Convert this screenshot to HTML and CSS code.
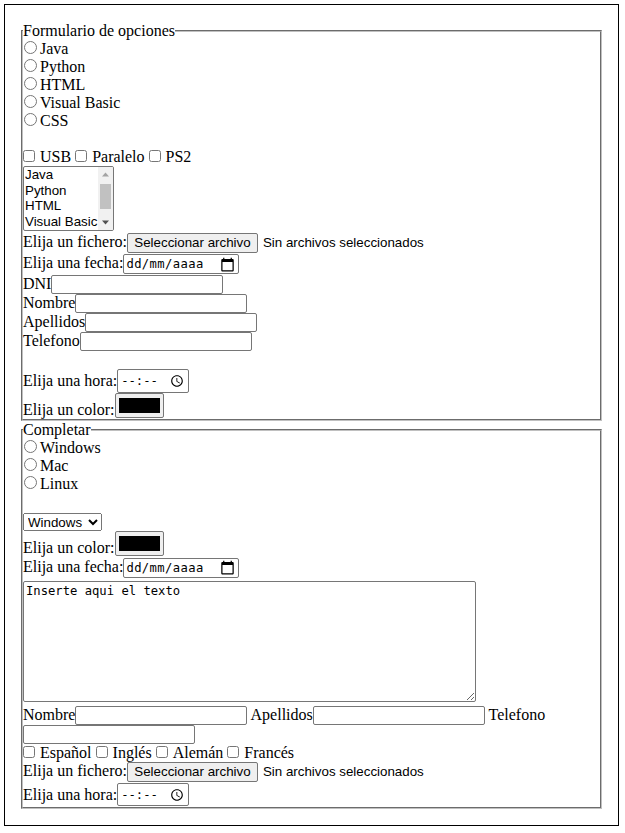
FILE: index.html
```html
<!DOCTYPE html>
<html lang="es">
<head>
<meta charset="utf-8">
<title>Formulario</title>
<link rel="stylesheet" href="styles.css">
</head>
<body>
<div class="page">
  <fieldset class="box">
    <legend class="legend">Formulario de opciones</legend>
    <div class="line"><input type="radio" name="lang" class="radio">Java</div>
    <div class="line"><input type="radio" name="lang" class="radio">Python</div>
    <div class="line"><input type="radio" name="lang" class="radio">HTML</div>
    <div class="line"><input type="radio" name="lang" class="radio">Visual Basic</div>
    <div class="line"><input type="radio" name="lang" class="radio">CSS</div>
    <div class="line"></div>
    <div class="line"><input type="checkbox" class="check">USB <input type="checkbox" class="check">Paralelo <input type="checkbox" class="check">PS2</div>
    <div class="listbox">
      <div class="options">
        <div class="opt">Java</div>
        <div class="opt">Python</div>
        <div class="opt">HTML</div>
        <div class="opt">Visual Basic</div>
      </div>
      <div class="scrollbar">
        <svg class="arrow" width="15" height="15" viewBox="0 0 15 15"><polygon points="4,9.5 11,9.5 7.5,5.5" fill="#a3a3a3"/></svg>
        <div class="track"><div class="thumb"></div></div>
        <svg class="arrow" width="15" height="15" viewBox="0 0 15 15"><polygon points="4,5.5 11,5.5 7.5,9.5" fill="#505050"/></svg>
      </div>
    </div>
    <div class="line h21">Elija un fichero:<span class="filebtn">Seleccionar archivo</span><span class="filetext">Sin archivos seleccionados</span></div>
    <div class="line h21">Elija una fecha:<span class="datebox"><span class="fieldin"><span class="dtext">dd/mm/aaaa</span><svg class="cal" width="15" height="15" viewBox="0 0 24 24"><path d="M20 3h-1V1h-2v2H7V1H5v2H4c-1.1 0-2 .9-2 2v16c0 1.1.9 2 2 2h16c1.1 0 2-.9 2-2V5c0-1.1-.9-2-2-2zm0 18H4V8h16v13z" fill="#000"/></svg></span></span></div>
    <div class="line h19">DNI<input type="text" class="text"></div>
    <div class="line h19">Nombre<input type="text" class="text"></div>
    <div class="line h19">Apellidos<input type="text" class="text"></div>
    <div class="line h19">Telefono<input type="text" class="text"></div>
    <div class="line"></div>
    <div class="line h24">Elija una hora:<span class="timebox"><span class="fieldin"><span class="ttext">--:--</span><svg class="clock" width="14" height="14" viewBox="0 0 24 24"><path d="M11.99 2C6.47 2 2 6.48 2 12s4.47 10 9.99 10C17.52 22 22 17.52 22 12S17.52 2 11.99 2zM12 20c-4.42 0-8-3.58-8-8s3.58-8 8-8 8 3.58 8 8-3.58 8-8 8zm.5-13H11v6l5.25 3.15.75-1.23-4.5-2.67z" fill="#000"/></svg></span></span></div>
    <div class="line h26">Elija un color:<span class="colorbox"><span class="swatch"></span></span></div>
  </fieldset>
  <fieldset class="box">
    <legend class="legend">Completar</legend>
    <div class="line"><input type="radio" name="so" class="radio">Windows</div>
    <div class="line"><input type="radio" name="so" class="radio">Mac</div>
    <div class="line"><input type="radio" name="so" class="radio">Linux</div>
    <div class="line"></div>
    <select class="drop">
      <option>Windows</option>
      <option>Mac</option>
      <option>Linux</option>
    </select>
    <div class="line h27">Elija un color:<span class="colorbox"><span class="swatch"></span></span></div>
    <div class="line h23">Elija una fecha:<span class="datebox"><span class="fieldin"><span class="dtext">dd/mm/aaaa</span><svg class="cal" width="15" height="15" viewBox="0 0 24 24"><path d="M20 3h-1V1h-2v2H7V1H5v2H4c-1.1 0-2 .9-2 2v16c0 1.1.9 2 2 2h16c1.1 0 2-.9 2-2V5c0-1.1-.9-2-2-2zm0 18H4V8h16v13z" fill="#000"/></svg></span></span></div>
    <textarea class="area">Inserte aqui el texto</textarea>
    <div class="line h19">Nombre<input type="text" class="text"> Apellidos<input type="text" class="text"> Telefono</div>
    <div class="line h19"><input type="text" class="text"></div>
    <div class="line h17"><input type="checkbox" class="check">Español <input type="checkbox" class="check">Inglés <input type="checkbox" class="check">Alemán <input type="checkbox" class="check">Francés</div>
    <div class="line h21">Elija un fichero:<span class="filebtn">Seleccionar archivo</span><span class="filetext">Sin archivos seleccionados</span></div>
    <div class="line h24">Elija una hora:<span class="timebox"><span class="fieldin"><span class="ttext">--:--</span><svg class="clock" width="14" height="14" viewBox="0 0 24 24"><path d="M11.99 2C6.47 2 2 6.48 2 12s4.47 10 9.99 10C17.52 22 22 17.52 22 12S17.52 2 11.99 2zM12 20c-4.42 0-8-3.58-8-8s3.58-8 8-8 8 3.58 8 8-3.58 8-8 8zm.5-13H11v6l5.25 3.15.75-1.23-4.5-2.67z" fill="#000"/></svg></span></span></div>
  </fieldset>
</div>
</body>
</html>
```

FILE: styles.css
```css
html, body {
  margin: 0;
  padding: 0;
  background: #fff;
}
body {
  font-family: "Liberation Serif", "Times New Roman", serif;
  font-size: 16px;
  line-height: 18px;
  color: #000;
}
.page {
  box-sizing: border-box;
  width: 615px;
  height: 822px;
  margin: 4px 0 0 4px;
  border: 1px solid #000;
  padding: 17px 16px 0;
}
.box {
  margin: 0;
  padding: 0;
  min-width: 0;
  border: 2px groove rgb(192, 192, 192);
}
.legend {
  padding: 0;
  line-height: 18px;
}
.line {
  height: 18px;
  white-space: nowrap;
}
.h17 { height: 17.5px; }
.h19 { height: 19px; }
.h21 { height: 21px; }
.h23 { height: 23.3px; }
.h24 { height: 24px; }
.h26 { height: 26px; }
.h27 { height: 27px; }

.radio {
  width: 13px;
  height: 13px;
  margin: 0 3px 1px 1px;
  vertical-align: baseline;
}
.check {
  width: 12px;
  height: 12px;
  margin: 0 5px 0 0;
  vertical-align: baseline;
}

.listbox {
  box-sizing: border-box;
  display: flex;
  width: 91px;
  height: 65px;
  margin: 0 0 2px;
  border: 1px solid #767676;
  border-radius: 2px;
  font-family: "Liberation Sans", Arial, sans-serif;
  font-size: 13.33px;
  line-height: 15.6px;
  overflow: hidden;
}
.options {
  flex: 1;
  padding-left: 1px;
}
.opt {
  white-space: nowrap;
}
.scrollbar {
  width: 15px;
  display: flex;
  flex-direction: column;
  background: #f1f1f1;
}
.arrow {
  display: block;
  flex: none;
}
.track {
  flex: 1;
  padding: 2px 2px 0;
}
.thumb {
  height: 25px;
  background: #c1c1c1;
}

.filebtn {
  box-sizing: border-box;
  display: inline-block;
  overflow: hidden;
  vertical-align: -6px;
  width: 131px;
  height: 20px;
  border: 1px solid #767676;
  border-radius: 2px;
  background: #efefef;
  font-family: "Liberation Sans", Arial, sans-serif;
  font-size: 13.33px;
  line-height: 17px;
  text-align: center;
}
.filetext {
  margin-left: 5px;
  font-family: "Liberation Sans", Arial, sans-serif;
  font-size: 13.33px;
}

.datebox, .timebox {
  box-sizing: border-box;
  display: inline-block;
  overflow: hidden;
  border: 1px solid #767676;
  border-radius: 2px;
  background: #fff;
  font-family: "DejaVu Sans Mono", "Liberation Mono", monospace;
  font-size: 12.2px;
}
.datebox {
  width: 116px;
  height: 20px;
  vertical-align: -6px;
}
.timebox {
  width: 72px;
  height: 23.5px;
  vertical-align: -7px;
}
.fieldin {
  display: flex;
  align-items: center;
  justify-content: space-between;
  height: 100%;
}
.dtext {
  padding-left: 2px;
  letter-spacing: 0.4px;
}
.ttext {
  padding-left: 3px;
}
.cal {
  margin-right: 3px;
}
.clock {
  margin-right: 4px;
}

.colorbox {
  box-sizing: border-box;
  display: inline-block;
  overflow: hidden;
  vertical-align: -3px;
  width: 49px;
  height: 25px;
  padding: 4px 3px;
  border: 1px solid #767676;
  border-radius: 2px;
  background: #efefef;
}
.swatch {
  display: block;
  height: 100%;
  background: #000;
}

.text {
  box-sizing: border-box;
  width: 172px;
  height: 19px;
  margin: 0;
  padding: 1px 2px;
  border: 1px solid #767676;
  border-radius: 2px;
  font-family: "Liberation Sans", Arial, sans-serif;
  font-size: 13.33px;
  vertical-align: baseline;
}

.drop {
  display: block;
  box-sizing: border-box;
  width: 79px;
  height: 18px;
  margin: 1.7px 0 0;
  font-family: "Liberation Sans", Arial, sans-serif;
  font-size: 13.33px;
}

.area {
  display: block;
  box-sizing: border-box;
  width: 453px;
  height: 121px;
  margin: 0 0 4.5px;
  padding: 2px;
  border: 1px solid #767676;
  border-radius: 2px;
  font-family: "DejaVu Sans Mono", "Liberation Mono", monospace;
  font-size: 12.2px;
  line-height: 15px;
}
```
